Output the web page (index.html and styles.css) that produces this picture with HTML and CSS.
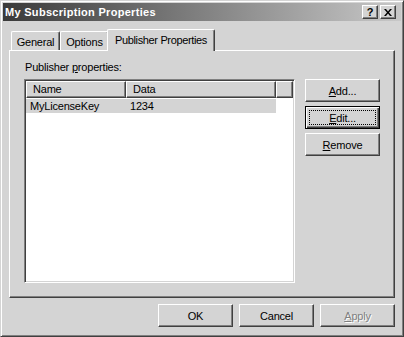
FILE: index.html
```html
<!DOCTYPE html>
<html>
<head>
<meta charset="utf-8">
<link rel="stylesheet" href="styles.css">
</head>
<body>
<div class="window">
  <div class="titlebar">
    <span class="title">My Subscription Properties</span>
    <div class="caption-btns">
      <span class="cbtn help">?</span>
      <span class="cbtn close"><svg width="8" height="7" viewBox="0 0 8 7"><path d="M0 0h2l2 2.4L6 0h2L5 3.5 8 7H6L4 4.6 2 7H0l3-3.5z" fill="#000"/></svg></span>
    </div>
  </div>
  <div class="tabs">
    <div class="tab tab-general">General</div>
    <div class="tab tab-options">Options</div>
    <div class="tab tab-active">Publisher Properties</div>
  </div>
  <div class="panel">
    <div class="label">Publisher <u>p</u>roperties:</div>
    <div class="panel-row">
      <div class="list">
        <div class="list-header">
          <div class="hcol col-name">Name</div>
          <div class="hcol col-data">Data</div>
          <div class="hcol col-fill"></div>
        </div>
        <div class="list-row selected">
          <span class="cell cell-name">MyLicenseKey</span>
          <span class="cell cell-data">1234</span>
        </div>
      </div>
      <div class="side-btns">
        <div class="btn"><span><u>A</u>dd...</span></div>
        <div class="btn default"><span class="focus"><u>E</u>dit...</span></div>
        <div class="btn"><span><u>R</u>emove</span></div>
      </div>
    </div>
  </div>
  <div class="footer">
    <div class="btn">OK</div>
    <div class="btn">Cancel</div>
    <div class="btn disabled"><span><u>A</u>pply</span></div>
  </div>
</div>
</body>
</html>
```
FILE: styles.css
```css
html, body {
  margin: 0;
  padding: 0;
  background: #d4d4d4;
}
body {
  font-family: "Liberation Sans", Arial, sans-serif;
  font-size: 11px;
  color: #000;
}
.window {
  width: 404px;
  height: 337px;
  box-sizing: border-box;
  background: #d4d4d4;
  border: 1px solid;
  border-color: #d4d4d4 #404040 #404040 #d4d4d4;
  box-shadow: inset 1px 1px #fff, inset -1px -1px #808080;
  padding: 2px;
}
.titlebar {
  height: 18px;
  display: flex;
  align-items: center;
  background: linear-gradient(to right, #3a3a3a, #c8c8c8);
  padding: 0 5px 0 2px;
}
.title {
  color: #fff;
  font-weight: bold;
  letter-spacing: 0.3px;
}
.caption-btns {
  margin-left: auto;
  display: flex;
  gap: 2px;
}
.cbtn {
  width: 16px;
  height: 14px;
  box-sizing: border-box;
  background: #d4d4d4;
  border: 1px solid;
  border-color: #fff #404040 #404040 #fff;
  box-shadow: inset -1px -1px #808080;
  display: flex;
  align-items: center;
  justify-content: center;
  font-weight: bold;
  font-size: 11px;
  line-height: 1;
}
.tabs {
  display: flex;
  align-items: flex-end;
  height: 21px;
  margin-top: 8px;
  padding-left: 8px;
}
.tab {
  height: 19px;
  box-sizing: border-box;
  border-top: 1px solid #fff;
  border-left: 1px solid #fff;
  border-right: 1px solid #404040;
  box-shadow: inset -1px 0 #808080;
  border-radius: 2px 2px 0 0;
  display: flex;
  align-items: center;
  justify-content: center;
  padding-top: 1px;
  letter-spacing: -0.2px;
}
.tab-general { width: 49px; }
.tab-options { width: 49px; }
.tab-active {
  width: 108px;
  height: 22px;
  margin: 0 -2px -1px -2px;
  background: #d4d4d4;
  position: relative;
  z-index: 1;
  padding-top: 0;
  padding-bottom: 2px;
  letter-spacing: -0.35px;
}
.panel {
  margin: 0 6px;
  height: 248px;
  box-sizing: border-box;
  border: 1px solid;
  border-color: #fff #404040 #404040 #fff;
  box-shadow: inset -1px -1px #808080;
  padding: 10px 14px 0 14px;
}
.label {
  line-height: 13px;
  margin-left: 1px;
  letter-spacing: -0.2px;
}
.panel-row {
  display: flex;
  gap: 10px;
  margin-top: 5px;
}
.list {
  width: 272px;
  height: 204px;
  box-sizing: border-box;
  background: #fff;
  border: 1px solid;
  border-color: #808080 #fff #fff #808080;
  box-shadow: inset 1px 1px #404040, inset -1px -1px #d4d4d4;
  padding: 1px;
}
.list-header {
  display: flex;
  height: 17px;
}
.hcol {
  box-sizing: border-box;
  height: 17px;
  background: #d4d4d4;
  border: 1px solid;
  border-color: #fff #404040 #404040 #fff;
  box-shadow: inset -1px -1px #808080;
  padding-left: 6px;
  line-height: 14px;
  letter-spacing: -0.2px;
}
.col-name { width: 100px; }
.col-data { width: 150px; }
.col-fill { flex: 1; padding: 0; }
.list-row {
  display: flex;
  height: 14px;
  margin-top: 1px;
  width: 250px;
  line-height: 14px;
}
.list-row.selected {
  background: #d4d4d4;
}
.cell {
  padding-left: 4px;
  letter-spacing: -0.2px;
}
.cell-name { width: 96px; }
.side-btns {
  display: flex;
  flex-direction: column;
  gap: 4px;
}
.btn {
  width: 75px;
  height: 23px;
  box-sizing: border-box;
  background: #d4d4d4;
  border: 1px solid;
  border-color: #fff #404040 #404040 #fff;
  box-shadow: inset -1px -1px #808080;
  display: flex;
  align-items: center;
  justify-content: center;
  letter-spacing: -0.2px;
}
.btn.default {
  border-color: #000;
  box-shadow: inset 1px 1px #fff, inset -1px -1px #404040, inset -2px -2px #808080;
  padding: 3px;
}
.btn.default .focus {
  flex: 1;
  align-self: stretch;
  border: 1px dotted #000;
  display: flex;
  align-items: center;
  justify-content: center;
}
.footer {
  display: flex;
  justify-content: flex-end;
  gap: 6px;
  margin-top: 6px;
  padding-right: 6px;
}
.btn.disabled {
  color: #808080;
  text-shadow: 1px 1px #fff;
}
```
